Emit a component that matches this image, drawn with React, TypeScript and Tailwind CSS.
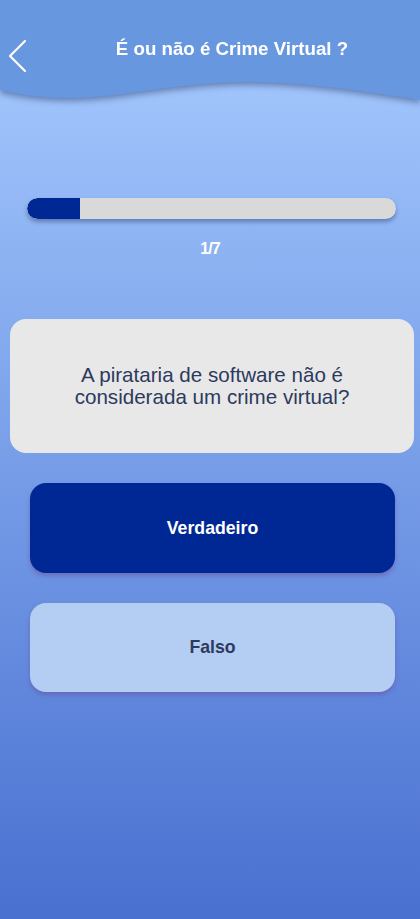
import React from "react";

const total = 7;
const current = 1;

function BackIcon() {
  return (
    <svg width="22" height="36" viewBox="0 0 22 36" fill="none">
      <path d="M18 3 L3 18 L18 33" stroke="white" strokeWidth="2.2" strokeLinecap="round" strokeLinejoin="round" />
    </svg>
  );
}

export default function App() {
  return (
    <div
      className="w-[420px] h-[919px] flex flex-col bg-gradient-to-b from-[#a9ccff] to-[#4a70d0] overflow-hidden"
      style={{ fontFamily: '"Liberation Sans", Arial, sans-serif' }}
    >
      {/* Header */}
      <div className="drop-shadow-[0_3px_3px_rgba(40,60,110,0.5)]">
        <div className="h-[82px] bg-[#6797df] flex items-start pt-[38px]">
          <button className="ml-[6px] w-[24px] flex justify-center">
            <BackIcon />
          </button>
          <h1 className="flex-1 text-center text-white font-bold text-[18.7px] leading-[22px] pl-[14px]">
            É ou não é Crime Virtual ?
          </h1>
        </div>
        <svg width="420" height="22" viewBox="0 0 420 22" className="block -mt-px">
          <path
            d="M0 0 H420 V19 C 380 12, 300 0, 244 1 C 170 2, 120 17, 70 17 C 40 17, 16 13, 0 9 Z"
            fill="#6797df"
          />
        </svg>
      </div>

      {/* Progress */}
      <div className="ml-[27px] mr-[24px] mt-[95px]">
        <div className="h-[21px] rounded-full bg-[#d9d9d9] overflow-hidden shadow-[0_3px_4px_rgba(40,60,110,0.45)]">
          <div className="h-full bg-[#002894] rounded-l-full" style={{ width: `${(53 / 369) * 100}%` }} />
        </div>
      </div>
      <p className="mt-[18px] text-center text-white font-bold text-[16px] tracking-[-1px]">
        {current}/{total}
      </p>

      {/* Question */}
      <div className="ml-[10px] mr-[6px] mt-[58px] h-[134px] rounded-[16px] bg-[#e8e8e8] flex items-center justify-center px-6">
        <p className="text-center text-[#2d3a5e] text-[20.6px] leading-[22px]">
          A pirataria de software não é
          <br />
          considerada um crime virtual?
        </p>
      </div>

      {/* Answers */}
      <div className="ml-[30px] mr-[25px] mt-[30px] flex flex-col gap-[30px]">
        <button className="h-[90px] rounded-[16px] bg-[#002894] text-white font-bold text-[17.7px] shadow-[0_3px_4px_rgba(110,80,160,0.55)]">
          Verdadeiro
        </button>
        <button className="h-[89px] rounded-[16px] bg-[#b3cdf3] text-[#2d3a5e] font-bold text-[17.7px] shadow-[0_3px_4px_rgba(110,80,160,0.55)]">
          Falso
        </button>
      </div>
    </div>
  );
}
